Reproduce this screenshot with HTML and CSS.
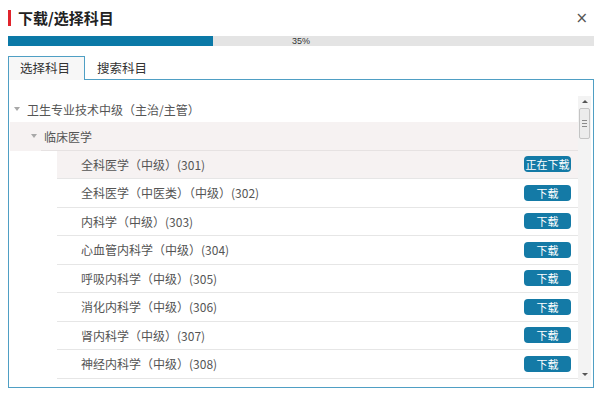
FILE: index.html
```html
<!DOCTYPE html>
<html lang="zh-CN">
<head>
    <meta charset="UTF-8">
    <title>下载/选择科目</title>
    <link rel="stylesheet" href="styles.css">
</head>
<body>
    <div class="dialog">
        <div class="dialog-head">
            <h2 class="dialog-title">下载/选择科目</h2>
            <span class="close">&#215;</span>
        </div>
        <div class="progress">
            <div class="progress-fill" style="width: 35%"></div>
            <span class="progress-text">35%</span>
        </div>
        <ul class="tabs">
            <li class="tab active">选择科目</li>
            <li class="tab">搜索科目</li>
        </ul>
        <div class="panel">
            <div class="tree-wrap">
                <ul class="tree">
                    <li class="row root"><span class="caret"></span>卫生专业技术中级（主治/主管）</li>
                    <li class="row group"><span class="caret"></span>临床医学</li>
                    <li class="row leaf current"><span>全科医学（中级）(301)</span><button class="btn">正在下载</button></li>
                    <li class="row leaf"><span>全科医学（中医类）（中级）(302)</span><button class="btn">下载</button></li>
                    <li class="row leaf"><span>内科学（中级）(303)</span><button class="btn">下载</button></li>
                    <li class="row leaf"><span>心血管内科学（中级）(304)</span><button class="btn">下载</button></li>
                    <li class="row leaf"><span>呼吸内科学（中级）(305)</span><button class="btn">下载</button></li>
                    <li class="row leaf"><span>消化内科学（中级）(306)</span><button class="btn">下载</button></li>
                    <li class="row leaf"><span>肾内科学（中级）(307)</span><button class="btn">下载</button></li>
                    <li class="row leaf"><span>神经内科学（中级）(308)</span><button class="btn">下载</button></li>
                </ul>
                <div class="scrollbar">
                    <span class="arrow up"></span>
                    <div class="track">
                        <div class="thumb"><i></i><i></i><i></i></div>
                    </div>
                    <span class="arrow down"></span>
                </div>
            </div>
        </div>
    </div>
</body>
</html>
```

FILE: styles.css
```css
body {
    margin: 0;
    background: #ffffff;
    font-family: "Noto Sans CJK SC", "Noto Sans", sans-serif;
    color: #555555;
}

ul {
    list-style: none;
    margin: 0;
    padding: 0;
}

.dialog {
    padding: 0 6px 0 8px;
}

.dialog-head {
    height: 36px;
    display: flex;
    align-items: center;
    justify-content: space-between;
}

.dialog-title {
    margin: 0;
    border-left: 3px solid #e0242c;
    padding-left: 7px;
    height: 16px;
    line-height: 16px;
    font-size: 15px;
    font-weight: bold;
    color: #222222;
}

.close {
    font-family: "DejaVu Sans", sans-serif;
    font-size: 15px;
    color: #555555;
    margin-right: 6px;
    line-height: 1;
}

.progress {
    display: grid;
    height: 10px;
    background: #e4e4e4;
}

.progress-fill,
.progress-text {
    grid-area: 1 / 1;
}

.progress-fill {
    background: #0b79a7;
}

.progress-text {
    justify-self: center;
    font-family: "Liberation Sans", sans-serif;
    font-size: 9px;
    line-height: 10px;
    color: #333333;
}

.tabs {
    display: flex;
    margin-top: 10px;
    height: 23px;
}

.tab {
    padding: 0 14px 0 11px;
    font-size: 12.5px;
    line-height: 22px;
    white-space: nowrap;
    color: #333333;
    border: 1px solid transparent;
    border-bottom: none;
}

.tab.active {
    background: #f7f7f7;
    border-color: #4f9fc4;
    margin-bottom: -1px;
    position: relative;
}

.panel {
    border: 1px solid #4f9fc4;
    padding: 16px 1px 7px 1px;
}

.tree-wrap {
    display: flex;
    height: 284px;
}

.tree {
    flex: 1;
    overflow: hidden;
}

.row {
    display: flex;
    align-items: center;
    box-sizing: border-box;
    height: 28.5px;
    font-size: 12px;
    white-space: nowrap;
}

.caret {
    width: 0;
    height: 0;
    border-left: 3.5px solid transparent;
    border-right: 3.5px solid transparent;
    border-top: 4px solid #a8a8a8;
    margin-right: 7px;
}

.root {
    height: 26px;
    padding-left: 4px;
}

.group {
    padding-left: 21px;
    background-color: #f6f2f2;
    background-image: linear-gradient(#e6e2e2, #e6e2e2);
    background-size: calc(100% - 31px) 1px;
    background-position: right bottom;
    background-repeat: no-repeat;
}

.leaf {
    margin-left: 47px;
    padding: 0 7px 0 24px;
    justify-content: space-between;
    border-bottom: 1px solid #e6e6e6;
}

.leaf.current {
    background: #f6f2f2;
}

.btn {
    width: 47px;
    height: 16px;
    padding: 0;
    border: none;
    border-radius: 4px;
    background: #147aa6;
    color: #ffffff;
    font-family: inherit;
    font-size: 11px;
    line-height: 16px;
}

.scrollbar {
    width: 13px;
    margin-right: 1px;
    background: #f3f3f3;
    display: flex;
    flex-direction: column;
    align-items: center;
}

.arrow {
    width: 0;
    height: 0;
    border-left: 3px solid transparent;
    border-right: 3px solid transparent;
}

.arrow.up {
    border-bottom: 3px solid #555555;
    margin: 4px 0 5px;
}

.arrow.down {
    border-top: 3px solid #555555;
    margin: 0 0 4px;
}

.track {
    flex: 1;
    width: 100%;
}

.thumb {
    box-sizing: border-box;
    width: 11px;
    height: 31px;
    margin: 0 auto;
    border: 1px solid #c4c4c4;
    border-radius: 2px;
    background: #ececec;
    display: flex;
    flex-direction: column;
    align-items: center;
    justify-content: center;
    gap: 2px;
}

.thumb i {
    width: 5px;
    height: 1px;
    background: #8a8a8a;
}
```
